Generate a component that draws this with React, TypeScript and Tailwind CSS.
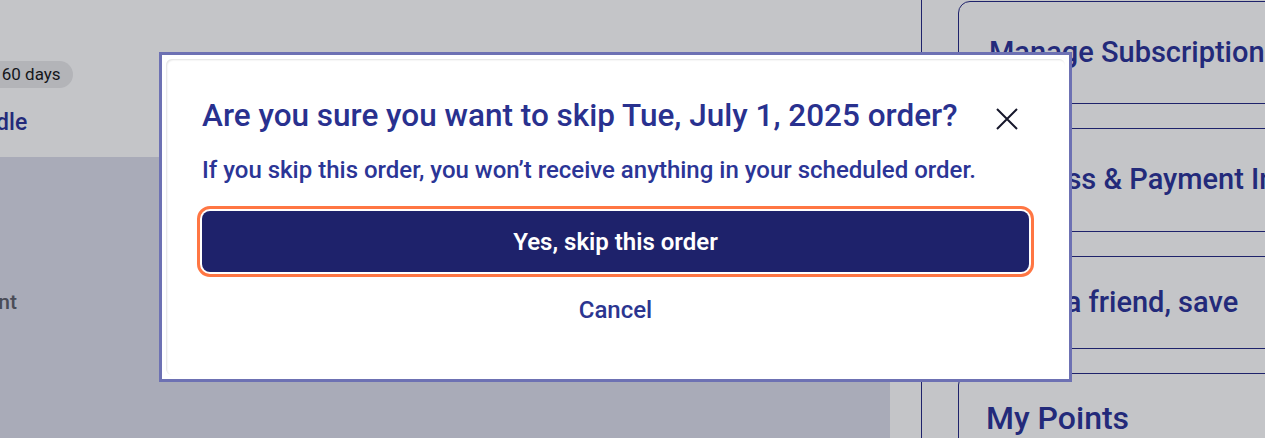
const cards = [
  { label: 'Manage Subscriptions', box: 'h-[103px] rounded-tl-xl pl-[30px]', size: 'text-[29px]' },
  { label: 'Address & Payment Info', box: 'h-[104px] pl-[30px]', size: 'text-[29px]' },
  { label: 'Refer a friend, save', box: 'h-[93px] pl-[30px]', size: 'text-[29px]' },
  { label: 'My Points', box: 'h-[90px] rounded-tl-xl pl-[27px]', size: 'text-[32px]' },
];

export default function App() {
  return (
    <div
      className="relative flex h-[438px] w-[1265px] overflow-hidden bg-[#c4c5c8]"
      style={{ fontFamily: 'Roboto, "Noto Sans", sans-serif' }}
    >
      {/* ── Main column (under the overlay) ── */}
      <div className="flex w-[890px] shrink-0 flex-col">
        <div className="flex h-[157px] flex-col pt-[61px]">
          <span className="-ml-[55px] w-fit rounded-full bg-[#b3b4b8] py-[3px] pl-[12px] pr-[12px] text-[17px] leading-[21px] text-[#15161a]">
            Every 60 days
          </span>
          <span className="-ml-[44px] mt-[22px] text-[23px] font-medium leading-[26px] text-[#232a7a]">
            Bundle
          </span>
        </div>
        <div className="flex-1 bg-[#a9abb8] pt-[132px]">
          <span className="-ml-[66px] block text-[21px] font-medium leading-[26px] text-[#4a4c57]">
            Payment
          </span>
        </div>
      </div>

      {/* ── Divider ── */}
      <div className="ml-[31px] w-px shrink-0 bg-[#1e226b]" />

      {/* ── Account cards ── */}
      <div className="ml-[36px] flex w-[340px] shrink-0 flex-col gap-[24px] pt-px">
        {cards.map((c) => (
          <div key={c.label} className={`flex ${c.box} shrink-0 items-center border border-[#1e226b]`}>
            <span className={`whitespace-nowrap ${c.size} font-medium text-[#232a7a]`}>{c.label}</span>
          </div>
        ))}
      </div>

      {/* ── Skip order dialog ── */}
      <div className="absolute left-[159px] top-[52px] w-[913px] border-[3px] border-[#6d71b3] bg-white p-[4px]">
        <div
          role="dialog"
          aria-labelledby="skip-heading"
          className="flex h-[316px] flex-col rounded-md bg-white px-[36px] pt-[37px] shadow-[inset_1px_1px_2px_rgba(0,0,0,0.12)]"
        >
          <div className="flex items-start justify-between">
            <h2 id="skip-heading" className="whitespace-nowrap text-[31.5px] font-medium leading-[40px] text-[#29318f]">
              Are you sure you want to skip Tue, July 1, 2025 order?
            </h2>
            <button aria-label="Close" className="mr-[11px] mt-[12px] text-[#16172b]">
              <svg width="22" height="22" viewBox="0 0 22 22" fill="none" stroke="currentColor" strokeWidth="2">
                <path d="M1 1L21 21M21 1L1 21" />
              </svg>
            </button>
          </div>

          <p className="mt-[19px] text-[24px] font-medium leading-[30px] text-[#2b3596]">
            If you skip this order, you won’t receive anything in your scheduled order.
          </p>

          <button className="mt-[26px] h-[61px] w-full shrink-0 rounded-lg bg-[#1e226b] text-[24px] font-semibold text-white outline-[3px] outline-offset-2 outline-[#ff7643] [outline-style:solid]">
            Yes, skip this order
          </button>

          <button className="mx-auto mt-[23px] text-[24px] font-medium leading-[30px] text-[#2b3590]">
            Cancel
          </button>
        </div>
      </div>
    </div>
  );
}
